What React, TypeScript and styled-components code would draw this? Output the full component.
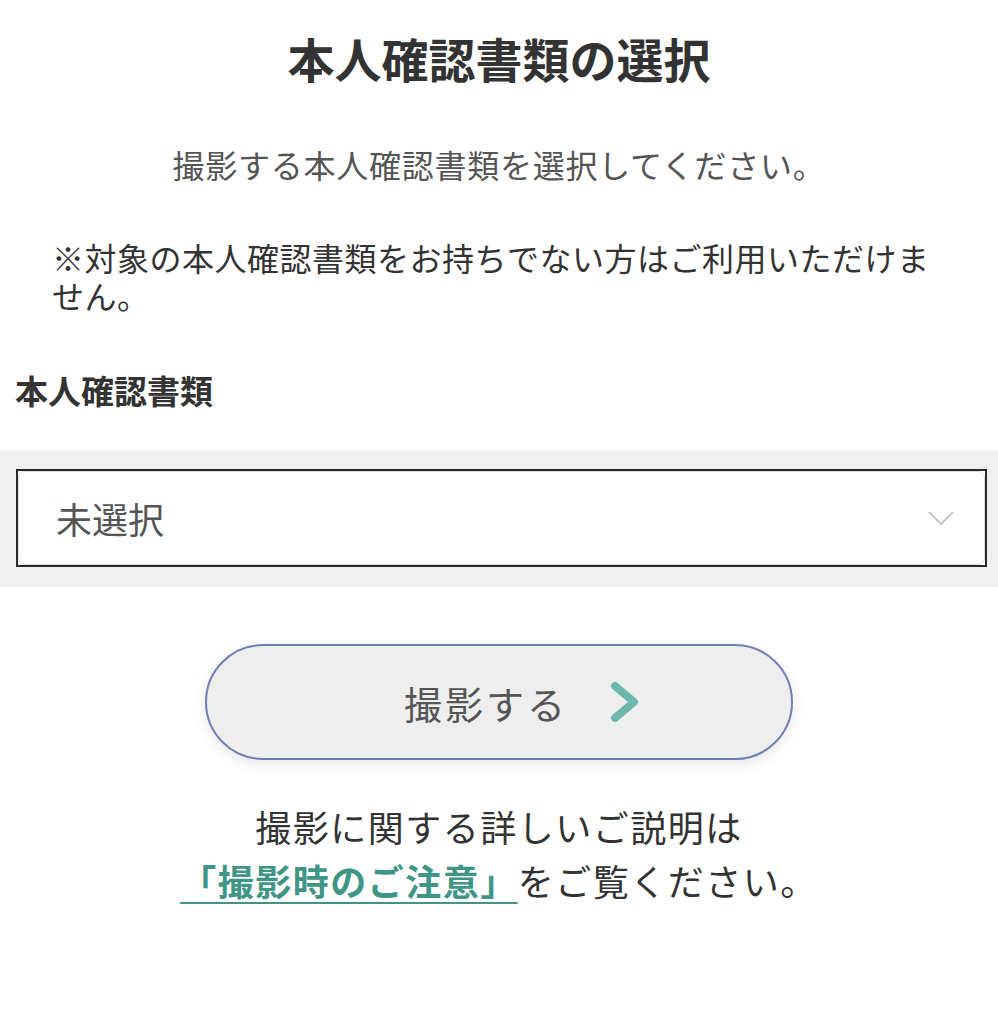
import styled, { createGlobalStyle } from "styled-components";

const GlobalStyle = createGlobalStyle`
  body {
    margin: 0;
    background: #fff;
    font-family: "Noto Sans CJK JP", "Noto Sans", sans-serif;
  }
`;

function App() {
  return (
    <>
      <GlobalStyle />
      <Page>
        <Title>本人確認書類の選択</Title>
        <Lead>撮影する本人確認書類を選択してください。</Lead>
        <Note>※対象の本人確認書類をお持ちでない方はご利用いただけません。</Note>
        <FieldLabel>本人確認書類</FieldLabel>
        <SelectBand>
          <SelectFrame>
            <SelectBox>
              <SelectText>未選択</SelectText>
              <svg width="26" height="15" viewBox="0 0 26 15">
                <path d="M1 1 L13 13 L25 1" fill="none" stroke="#b8b8c0" strokeWidth="1.6" />
              </svg>
            </SelectBox>
          </SelectFrame>
        </SelectBand>
        <ShootButton>
          <ButtonText>撮影する</ButtonText>
          <svg width="30" height="42" viewBox="0 0 30 42">
            <path
              d="M5 5 L24 21 L5 37"
              fill="none"
              stroke="#6cb8ac"
              strokeWidth="8"
              strokeLinecap="round"
              strokeLinejoin="round"
            />
          </svg>
        </ShootButton>
        <Guide>
          撮影に関する詳しいご説明は
          <br />
          <GuideLink>「撮影時のご注意」</GuideLink>をご覧ください。
        </Guide>
      </Page>
    </>
  );
}

export default App;

const Page = styled.div`
  width: 998px;
  display: flex;
  flex-direction: column;
  padding-bottom: 100px;
`;

const Title = styled.h1`
  margin: 25px 0 0;
  font-size: 47px;
  line-height: 66px;
  font-weight: 700;
  color: #333;
  text-align: center;
`;

const Lead = styled.p`
  margin: 49px 0 0;
  font-size: 32px;
  line-height: 48px;
  letter-spacing: 0.75px;
  color: #555;
  text-align: center;
`;

const Note = styled.p`
  margin: 50px 0 0;
  padding: 0 40px 0 52px;
  font-size: 32px;
  line-height: 38px;
  letter-spacing: 0.5px;
  color: #333;
`;

const FieldLabel = styled.h2`
  margin: 54px 0 0;
  padding-left: 15px;
  font-size: 33px;
  line-height: 44px;
  font-weight: 700;
  color: #333;
`;

const SelectBand = styled.div`
  margin-top: 38px;
  background: #f0f0f0;
  padding: 19px 11px 20px 16px;
`;

const SelectFrame = styled.div`
  border: 2px solid #2a2a2a;
  background: #fff;
  height: 94px;
  box-sizing: content-box;
`;

const SelectBox = styled.div`
  height: 100%;
  box-sizing: border-box;
  border: 1px solid #dcdce6;
  border-radius: 7px;
  display: flex;
  align-items: center;
  justify-content: space-between;
  padding: 0 30px 0 37px;
`;

const SelectText = styled.span`
  font-size: 36px;
  color: #555;
`;

const ShootButton = styled.button`
  margin: 57px auto 0;
  width: 588px;
  height: 116px;
  border: 2px solid #6f7fb6;
  border-radius: 58px;
  background: #eeeeee;
  box-shadow: 0 5px 14px rgba(0, 0, 0, 0.09);
  display: flex;
  align-items: center;
  justify-content: center;
  gap: 42px;
  padding: 0 0 0 46px;
  font-family: inherit;
`;

const ButtonText = styled.span`
  font-size: 38px;
  letter-spacing: 3px;
  color: #555;
`;

const Guide = styled.p`
  margin: 39px 0 0;
  font-size: 36px;
  line-height: 54px;
  letter-spacing: 1.5px;
  color: #333;
  text-align: center;
`;

const GuideLink = styled.a`
  color: #3f9686;
  font-weight: 700;
  text-decoration: underline;
  text-decoration-thickness: 2px;
  text-underline-offset: 6px;
`;
